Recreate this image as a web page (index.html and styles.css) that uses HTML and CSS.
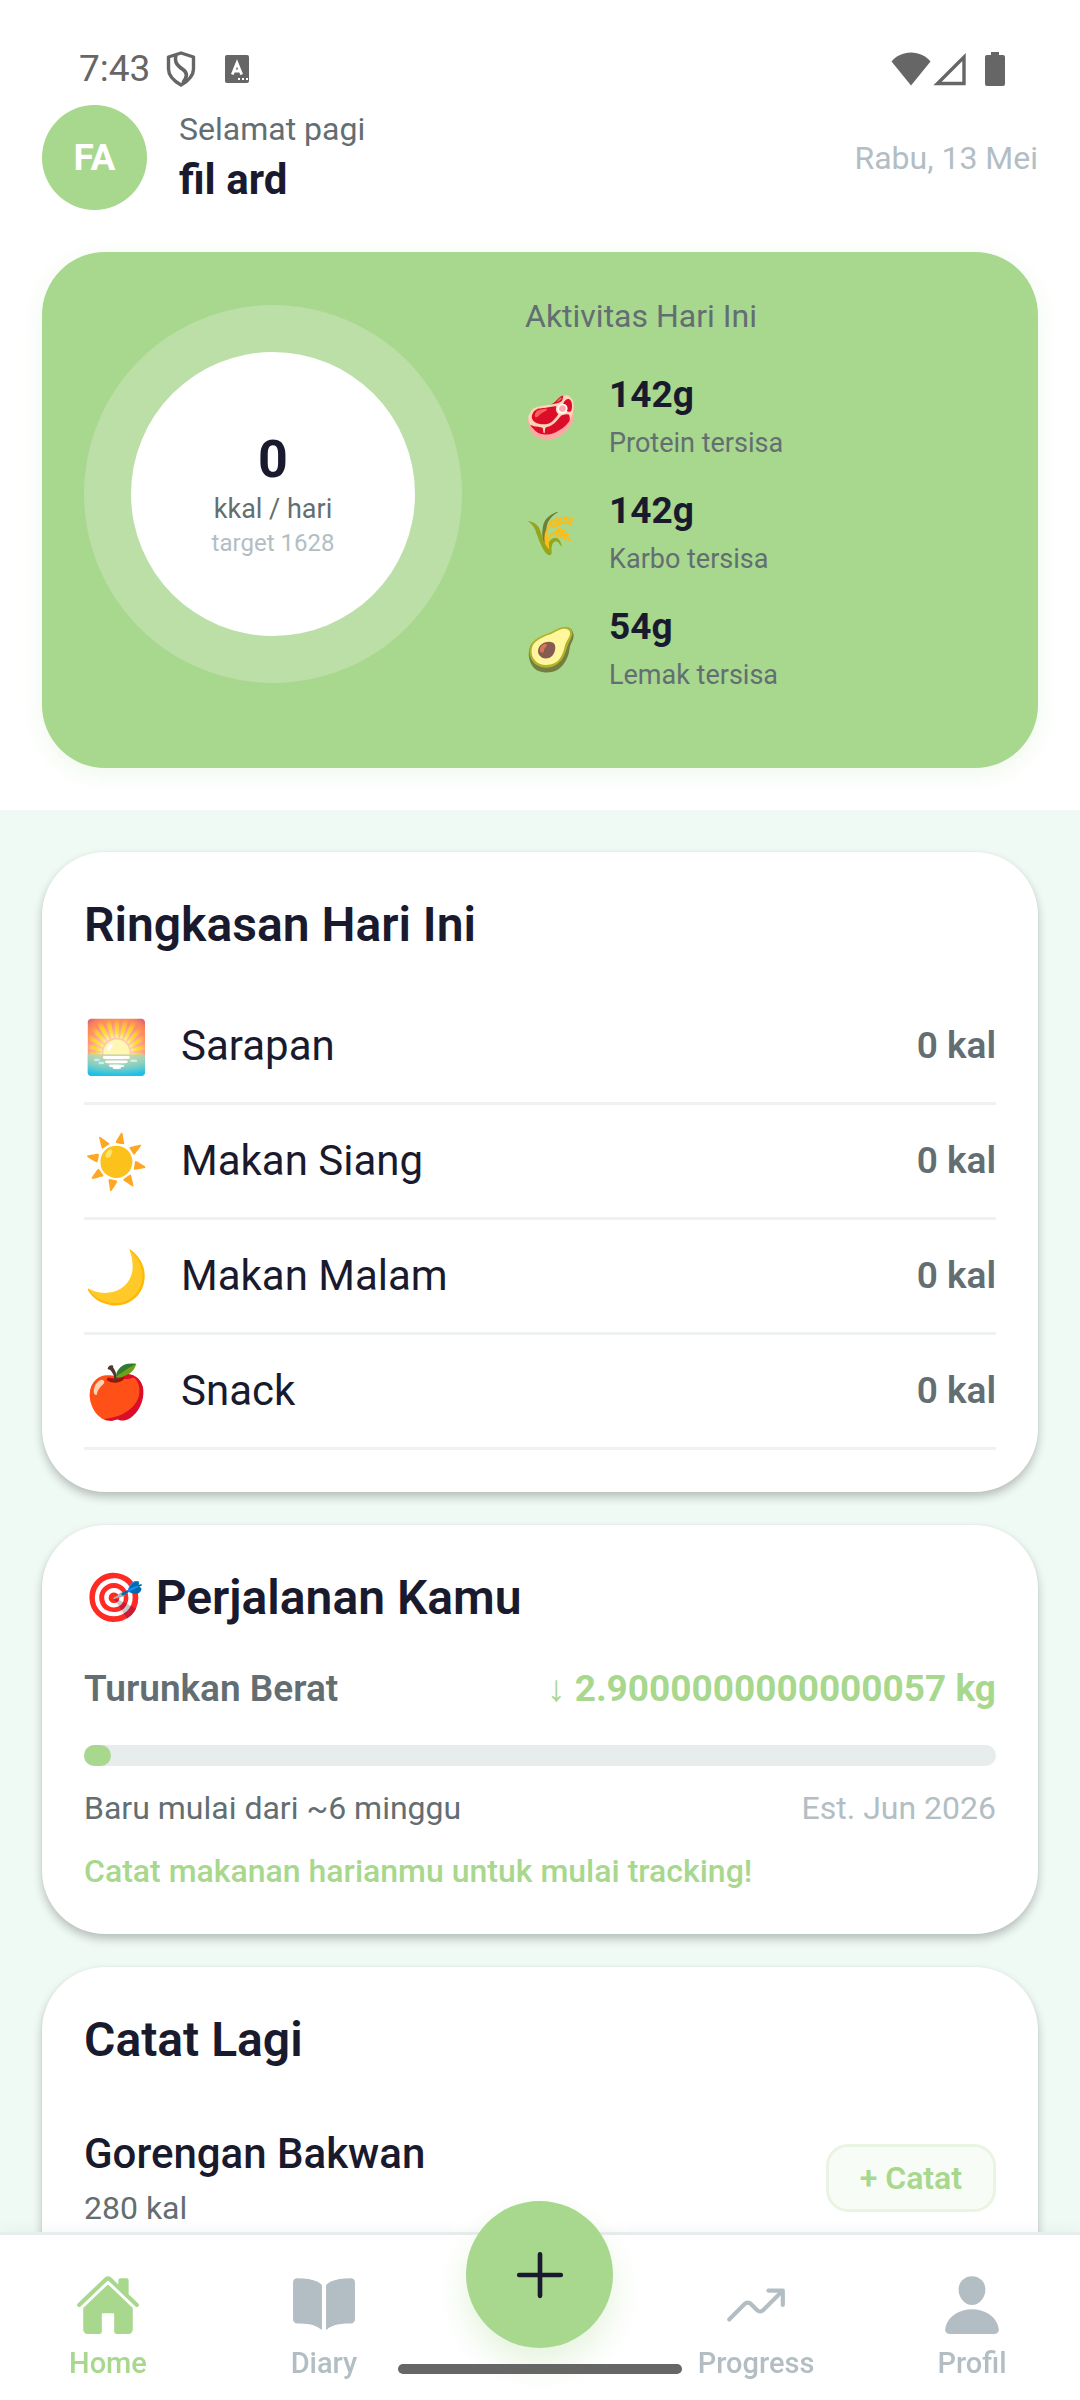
FILE: index.html
```html
<!DOCTYPE html>
<html lang="id">
<head>
<meta charset="utf-8">
<meta name="viewport" content="width=device-width, initial-scale=1">
<title>Home</title>
<link rel="stylesheet" href="styles.css">
</head>
<body>
<div class="app">
  <main class="scroll">
    <header class="top">
      <div class="status">
        <div class="status-group">
          <span class="clock">7:43</span>
          <svg class="ic-shield" viewBox="0 0 30 36" aria-hidden="true"><path d="M15 2 27.500 6v12c0 7-5.500 12-12.500 16C8 30 2.500 25 2.500 18V6z" fill="none" stroke="currentColor" stroke-width="3.400" stroke-linejoin="round"/><path d="M10 4C8 12 12 15 17 18.500c5 3.500 4 8 0 13" fill="none" stroke="currentColor" stroke-width="3.600"/></svg>
          <svg class="ic-a" viewBox="0 0 24 28" aria-hidden="true"><rect width="24" height="28" rx="2" fill="currentColor"/><path d="M7.300 19.500 12 8l4.700 11.500M8.800 16h6.400" fill="none" stroke="#fff" stroke-width="2.800"/><path d="M13 24h2M17 24h2M21 24h2" stroke="#fff" stroke-width="2.200"/></svg>
        </div>
        <div class="status-group status-right">
          <svg class="ic-wifi" viewBox="0 0 40 34" aria-hidden="true"><path d="M20 33.500 .5 9.500C5 4 12 .5 20 .5S35 4 39.500 9.500z" fill="currentColor"/></svg>
          <svg class="ic-signal" viewBox="0 0 33 34" aria-hidden="true"><path d="M31 5v26.500H4.500z" fill="none" stroke="currentColor" stroke-width="3.400"/></svg>
          <svg class="ic-battery" viewBox="0 0 20 34" aria-hidden="true"><path d="M6 0h8v3h4a2 2 0 0 1 2 2v27a2 2 0 0 1-2 2H2a2 2 0 0 1-2-2V5a2 2 0 0 1 2-2h4z" fill="currentColor"/></svg>
        </div>
      </div>
      <div class="greeting">
        <div class="avatar">FA</div>
        <div class="who">
          <span class="body muted">Selamat pagi</span>
          <span class="name">fil ard</span>
        </div>
        <span class="body faint">Rabu, 13 Mei</span>
      </div>
      <section class="hero">
        <div class="ring">
          <div class="ring-inner">
            <span class="ring-value">0</span>
            <span class="caption muted">kkal / hari</span>
            <span class="ring-target faint">target 1628</span>
          </div>
        </div>
        <div class="macros">
          <span class="body muted macros-title">Aktivitas Hari Ini</span>
          <ul class="macro-list">
            <li class="macro"><span class="emoji-sm">🥩</span><div class="macro-text"><span class="strong">142g</span><span class="caption muted">Protein tersisa</span></div></li>
            <li class="macro"><span class="emoji-sm">🌾</span><div class="macro-text"><span class="strong">142g</span><span class="caption muted">Karbo tersisa</span></div></li>
            <li class="macro"><span class="emoji-sm">🥑</span><div class="macro-text"><span class="strong">54g</span><span class="caption muted">Lemak tersisa</span></div></li>
          </ul>
        </div>
      </section>
    </header>

    <div class="cards">
      <section class="card">
        <h2 class="title">Ringkasan Hari Ini</h2>
        <ul class="meals">
          <li class="meal"><span class="emoji">🌅</span><span class="meal-name">Sarapan</span><span class="semi muted">0 kal</span></li>
          <li class="meal"><span class="emoji">☀️</span><span class="meal-name">Makan Siang</span><span class="semi muted">0 kal</span></li>
          <li class="meal"><span class="emoji">🌙</span><span class="meal-name">Makan Malam</span><span class="semi muted">0 kal</span></li>
          <li class="meal"><span class="emoji">🍎</span><span class="meal-name">Snack</span><span class="semi muted">0 kal</span></li>
        </ul>
      </section>

      <section class="card">
        <h2 class="title">🎯 Perjalanan Kamu</h2>
        <div class="split goal">
          <span class="semi muted">Turunkan Berat</span>
          <span class="strong green">↓ 2.9000000000000057 kg</span>
        </div>
        <div class="track"><div class="fill" style="width: 3%"></div></div>
        <div class="split">
          <span class="body muted">Baru mulai dari ~6 minggu</span>
          <span class="body faint">Est. Jun 2026</span>
        </div>
        <p class="body tip green">Catat makanan harianmu untuk mulai tracking!</p>
      </section>

      <section class="card">
        <h2 class="title">Catat Lagi</h2>
        <div class="food">
          <div class="food-text">
            <span class="food-name">Gorengan Bakwan</span>
            <span class="body muted">280 kal</span>
          </div>
          <button class="log" type="button">+ Catat</button>
        </div>
      </section>
    </div>
  </main>

  <nav class="tabs">
    <a class="tab active" href="#home">
      <svg class="tab-icon" viewBox="0 0 512 512" aria-hidden="true"><path fill="currentColor" d="M261.560 101.280a8 8 0 0 0-11.060 0L66.400 277.150a8 8 0 0 0-2.470 5.790L63.900 448a32 32 0 0 0 32 32H192a16 16 0 0 0 16-16V328a8 8 0 0 1 8-8h80a8 8 0 0 1 8 8v136a16 16 0 0 0 16 16h96.060a32 32 0 0 0 32-32V282.940a8 8 0 0 0-2.470-5.790z"/><path fill="currentColor" d="M490.910 244.150l-74.800-71.560V64a16 16 0 0 0-16-16h-48a16 16 0 0 0-16 16v32l-57.920-55.380C272.770 35.140 264.710 32 256 32c-8.680 0-16.720 3.140-22.140 8.630l-212.700 203.500c-6.220 6-7 15.870-1.340 22.370A16 16 0 0 0 43 267.560L250.500 69.280a8 8 0 0 1 11.060 0l207.520 198.280a16 16 0 0 0 22.590-.44c6.140-6.360 5.630-16.860-.76-22.970z"/></svg>
      <span>Home</span>
    </a>
    <a class="tab" href="#diary">
      <svg class="tab-icon" viewBox="0 0 512 512" aria-hidden="true"><path fill="currentColor" d="M202.240 74C166.110 56.750 115.610 48.300 48 48a31.360 31.360 0 0 0-17.920 5.330A32 32 0 0 0 16 79.900V366c0 19.340 13.760 33.930 32 33.930 71.070 0 142.360 6.640 185.060 47a4.110 4.110 0 0 0 6.940-3V106.820a15.890 15.890 0 0 0-5.460-12A143 143 0 0 0 202.240 74zM481.920 53.300A31.330 31.330 0 0 0 464 48c-67.610.3-118.110 8.710-154.240 26a143.310 143.310 0 0 0-32.310 20.780 15.930 15.930 0 0 0-5.450 12v337.130a3.930 3.930 0 0 0 6.680 2.810c25.670-25.500 70.720-46.820 185.360-46.810a32 32 0 0 0 32-32v-288a32 32 0 0 0-14.120-26.610z"/></svg>
      <span>Diary</span>
    </a>
    <div class="tab-slot">
      <button class="fab" type="button" aria-label="Tambah">
        <svg class="fab-icon" viewBox="0 0 512 512" aria-hidden="true"><path d="M256 112v288M400 256H112" fill="none" stroke="currentColor" stroke-width="32" stroke-linecap="round"/></svg>
      </button>
    </div>
    <a class="tab" href="#progress">
      <svg class="tab-icon" viewBox="0 0 512 512" aria-hidden="true"><g fill="none" stroke="currentColor" stroke-width="32" stroke-linecap="round" stroke-linejoin="round"><path d="M352 144h112v112"/><path d="M48 368l121.370-121.370a32 32 0 0 1 45.260 0l50.740 50.740a32 32 0 0 0 45.260 0L448 160"/></g></svg>
      <span>Progress</span>
    </a>
    <a class="tab" href="#profil">
      <svg class="tab-icon" viewBox="0 0 512 512" aria-hidden="true"><path fill="currentColor" d="M332.640 64.580C313.180 43.570 286 32 256 32c-30.160 0-57.430 11.500-76.800 32.380-19.580 21.110-29.120 49.800-26.880 80.780C156.760 206.280 203.270 256 256 256s99.160-49.710 103.670-110.820c2.270-30.700-7.330-59.330-27.030-80.600zM432 480H80a31 31 0 0 1-24.200-11.130c-6.500-7.770-9.120-18.380-7.180-29.110C57.060 392.940 83.400 353.610 124.800 326c36.780-24.510 83.370-38 131.200-38s94.420 13.500 131.200 38c41.400 27.600 67.740 66.930 76.180 113.750 1.940 10.730-.68 21.340-7.180 29.110A31 31 0 0 1 432 480z"/></svg>
      <span>Profil</span>
    </a>
    <div class="home-bar"></div>
  </nav>
</div>
</body>
</html>
```
FILE: styles.css
```css
:root {
  --green: #a8d78e;
  --ink: #1a1a2e;
  --muted: #636e72;
  --faint: #b2bec3;
  --system: #666;
}

* { box-sizing: border-box; }

body {
  margin: 0;
  font-family: Roboto, "Noto Color Emoji", sans-serif;
  color: var(--ink);
  background: #fff;
}

h2, p, ul { margin: 0; padding: 0; }
ul { list-style: none; }
svg { display: block; flex: none; }
button { font-family: inherit; padding: 0; cursor: pointer; }

.app {
  display: flex;
  flex-direction: column;
  height: 100vh;
}

.scroll {
  flex: 1;
  min-height: 0;
  overflow-y: auto;
  scrollbar-width: none;
  background: #f0faf5;
}

/* Text styles */
.body { font-size: 32px; line-height: 42px; }
.caption { font-size: 27px; line-height: 36px; }
.strong { font-size: 37px; line-height: 48px; font-weight: 700; }
.semi { font-size: 37px; line-height: 48px; font-weight: 600; }
.title { font-size: 48px; line-height: 62px; font-weight: 600; }
.muted { color: var(--muted); }
.faint { color: var(--faint); }
.green { color: var(--green); }

/* Header */
.top {
  padding: 0 42px 42px;
  background: #fff;
}

.status {
  display: flex;
  align-items: center;
  justify-content: space-between;
  height: 105px;
  padding: 32px 33px 0 37px;
  color: var(--system);
}
.status-group { display: flex; align-items: center; }
.clock { font-size: 37px; line-height: 44px; }
.ic-shield { width: 30px; height: 36px; margin-left: 16px; }
.ic-a { width: 24px; height: 28px; margin-left: 29px; }
.ic-wifi { width: 40px; height: 34px; }
.ic-signal { width: 33px; height: 34px; margin-left: 2px; }
.ic-battery { width: 20px; height: 34px; margin-left: 19px; }

.greeting {
  display: flex;
  align-items: center;
  gap: 32px;
}
.avatar {
  display: grid;
  place-items: center;
  width: 105px;
  height: 105px;
  border-radius: 50%;
  background: var(--green);
  color: #fff;
  font-size: 37px;
  font-weight: 700;
}
.who {
  flex: 1;
  display: flex;
  flex-direction: column;
  gap: 4px;
  padding-bottom: 2px;
}
.name { font-size: 42px; line-height: 52px; font-weight: 700; }

.hero {
  display: flex;
  align-items: center;
  gap: 63px;
  margin-top: 42px;
  padding: 43px 42px 75px;
  border-radius: 63px;
  background: var(--green);
  box-shadow: 0 6px 24px rgba(168, 215, 142, 0.18);
}
.ring {
  display: grid;
  place-items: center;
  flex: none;
  width: 378px;
  height: 378px;
  border-radius: 50%;
  background: rgba(255, 255, 255, 0.22);
}
.ring-inner {
  display: flex;
  flex-direction: column;
  align-items: center;
  justify-content: center;
  width: 284px;
  height: 284px;
  border-radius: 50%;
  background: #fff;
}
.ring-value { font-size: 52px; line-height: 62px; font-weight: 700; }
.ring-target { font-size: 24px; line-height: 32px; }

.macros { flex: 1; }
.macros-title { display: block; }
.macro-list {
  display: flex;
  flex-direction: column;
  gap: 26px;
  margin-top: 34px;
}
.macro { display: flex; align-items: center; gap: 32px; }
.macro-text { display: flex; flex-direction: column; gap: 6px; }
.emoji-sm { width: 52px; padding-top: 4px; font-size: 42px; line-height: 52px; }

/* Cards */
.cards {
  display: flex;
  flex-direction: column;
  gap: 33px;
  padding: 42px;
}
.card {
  padding: 42px;
  border-radius: 63px;
  background: #fff;
  box-shadow: 0 5px 10px rgba(0, 0, 0, 0.24), 0 0 2px rgba(0, 0, 0, 0.06);
}

.meals { margin-top: 34px; }
.meal {
  display: flex;
  align-items: center;
  gap: 32px;
  height: 115px;
  border-bottom: 3px solid #eef2f3;
}
.emoji { width: 65px; padding-top: 4px; font-size: 52px; line-height: 62px; }
.meal-name { flex: 1; font-size: 42px; line-height: 54px; }

.split { display: flex; align-items: center; justify-content: space-between; }
.goal { margin-top: 36px; }
.track {
  height: 21px;
  margin: 32px 0 21px;
  border-radius: 11px;
  background: #e7ecec;
}
.fill { height: 100%; border-radius: 11px; background: var(--green); }
.tip { margin-top: 21px; font-weight: 500; }

.food {
  display: flex;
  align-items: center;
  justify-content: space-between;
  margin-top: 35px;
  padding: 21px 0;
}
.food-text { display: flex; flex-direction: column; gap: 6px; }
.food-name { font-size: 42px; line-height: 54px; font-weight: 500; }
.log {
  padding: 10px 31px;
  border: 3px solid #e9f4e2;
  border-radius: 22px;
  background: #f8fcf6;
  color: var(--green);
  font-size: 32px;
  line-height: 42px;
  font-weight: 600;
}

/* Bottom navigation */
.tabs {
  position: relative;
  display: grid;
  grid-template-columns: repeat(5, 1fr);
  padding: 37px 0 20px;
  border-top: 3px solid #e7ecee;
  background: #fff;
  box-shadow: 0 0 16px rgba(0, 0, 0, 0.05);
}
.tab {
  display: flex;
  flex-direction: column;
  align-items: center;
  gap: 8px;
  color: var(--faint);
  font-size: 29px;
  line-height: 34px;
  font-weight: 500;
  text-decoration: none;
}
.tab.active { color: var(--green); }
.tab-icon { width: 66px; height: 66px; }

.fab {
  position: absolute;
  top: -34px;
  left: calc(50% - 74px);
  display: grid;
  place-items: center;
  width: 147px;
  height: 147px;
  border: 0;
  border-radius: 50%;
  background: var(--green);
  color: var(--ink);
  box-shadow: 0 16px 32px rgba(168, 215, 142, 0.3);
}
.fab-icon { width: 74px; height: 74px; }
.home-bar {
  position: absolute;
  bottom: 26px;
  left: calc(50% - 142px);
  width: 284px;
  height: 10px;
  border-radius: 5px;
  background: var(--system);
}
```
